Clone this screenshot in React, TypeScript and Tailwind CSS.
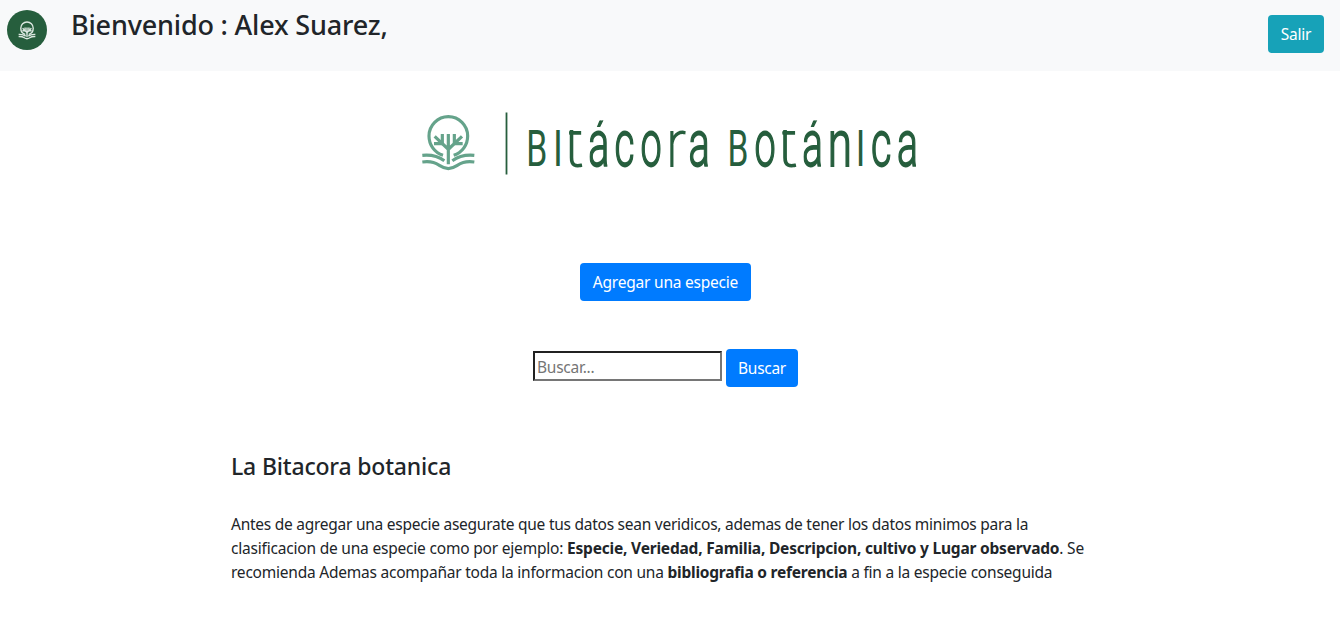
type Glyph = { ch: string; x0: number; x1: number };

/* Ink bounds of each letter in font units (2048 per em). */
const INK: Record<string, [number, number]> = {
  B: [169, 1188],
  i: [183, 375],
  t: [206, 637],
  "á": [109, 1000],
  a: [109, 1000],
  c: [92, 1003],
  o: [91, 1078],
  r: [140, 663],
  n: [140, 991],
};

const WORDS: Glyph[][] = [
  [
    { ch: "B", x0: 529, x1: 545.8 },
    { ch: "i", x0: 556.3, x1: 559.7 },
    { ch: "t", x0: 569.7, x1: 583.5 },
    { ch: "á", x0: 590, x1: 607.3 },
    { ch: "c", x0: 616.3, x1: 633.5 },
    { ch: "o", x0: 642.3, x1: 660.5 },
    { ch: "r", x0: 670.2, x1: 685 },
    { ch: "a", x0: 690.7, x1: 708 },
  ],
  [
    { ch: "B", x0: 730.3, x1: 747 },
    { ch: "o", x0: 756.3, x1: 774.5 },
    { ch: "t", x0: 783, x1: 797.3 },
    { ch: "á", x0: 804, x1: 821 },
    { ch: "n", x0: 830.7, x1: 849 },
    { ch: "i", x0: 859, x1: 862.3 },
    { ch: "c", x0: 872.7, x1: 890.3 },
    { ch: "a", x0: 899, x1: 916 },
  ],
];

function letterClass(ch: string) {
  if (ch === "i") return "font-[Roboto,sans-serif] font-normal uppercase";
  if (ch === "B") return "font-[Roboto,sans-serif] font-normal";
  if (ch === "t" || ch === "r") return "font-[Roboto,sans-serif] font-thin";
  return "font-[Roboto,sans-serif] font-light";
}

function Letter({ ch, x0, x1 }: Glyph) {
  const caps = ch === "B" || ch === "i";
  const size = caps ? 50 : 65;
  const [b0, b1] = INK[ch];
  const k = size / 2048;
  const sx = (x1 - x0) / ((b1 - b0) * k);
  const clipped = ch === "t" || ch === "á";
  const id = `clip${Math.round(x0)}`;
  return (
    <g clipPath={clipped ? `url(#${id})` : undefined}>
      {clipped && (
        <clipPath id={id}>
          <rect x={x0 - 0.5} y={ch === "t" ? 130 : 120.5} width={x1 - x0 + 2} height={50} />
        </clipPath>
      )}
      <text
        transform={`translate(${x0 - b0 * k * sx} 166) scale(${sx} 1)`}
        fontSize={size}
        className={letterClass(ch)}
        stroke="#265e3d"
        strokeWidth={caps ? 0 : 1.8}
      >
        {ch}
      </text>
    </g>
  );
}

function Mark({ weight }: { weight: number }) {
  return (
    <g fill="none" stroke="currentColor" strokeWidth={weight}>
      <path d="M84 151C58 143 42 119 42 93a58 58 0 0 1 116 0c0 26-16 50-42 58" />
      <path d="M100 178V87M99 132L59 94M101 132L141 94" />
      <path d="M82 87V114M57 116H84M118 87V114M143 116H116" />
      <path d="M22 151C52 148 70 154 88 167M178 151C148 148 130 154 112 167" />
      <path d="M22 171C72 165 72 191 100 191S128 165 178 171" />
    </g>
  );
}

function Wordmark() {
  return (
    <svg viewBox="415 105 510 80" className="h-20 w-[510px]" fill="#265e3d" role="img">
      <g transform="translate(415 105) scale(.33333)" className="text-[#65a38b]">
        <Mark weight={9.5} />
      </g>
      <rect x="505.6" y="112.5" width="1.8" height="62" />
      {WORDS.map((word, i) => (
        <g key={i}>
          {word.map((g) => (
            <Letter key={g.x0} {...g} />
          ))}
        </g>
      ))}
    </svg>
  );
}

export default function App() {
  return (
    <div className="h-[621px] overflow-hidden bg-white font-['Noto_Sans',sans-serif] text-base text-[#212529]">
      <header className="flex h-[71px] items-start bg-[#f8f9fa] pl-[7px] pr-4">
        <div className="mt-2.5 flex size-10 items-center justify-center rounded-full bg-[#265e3d] text-[#dce8e1]">
          <svg viewBox="16 28 168 172" className="h-[19px] w-[18px]">
            <Mark weight={13} />
          </svg>
        </div>
        <h3 className="ml-6 mt-2 text-[27px] leading-[33px] font-medium tracking-[-0.18px] whitespace-nowrap">
          Bienvenido : Alex Suarez,
        </h3>
        <button className="mt-[15px] ml-auto h-[38px] w-14 rounded bg-[#17a2b8] pt-0.5 text-[15.5px] tracking-[-0.22px] text-white">
          Salir
        </button>
      </header>
      <main>
        <div className="flex justify-center pt-[34px]">
          <Wordmark />
        </div>
        <div className="flex justify-center pt-[78px] pr-[9px]">
          <button className="h-[38px] w-[171px] rounded bg-[#007bff] pt-0.5 text-[15.5px] tracking-[-0.22px] whitespace-nowrap text-white">
            Agregar una especie
          </button>
        </div>
        <form className="flex justify-center gap-1 pt-12 pr-[9px]">
          <input
            placeholder="Buscar..."
            className="mt-0.5 h-[30px] w-[189px] border-2 border-t-[#212121] border-r-[#767676] border-b-[#767676] border-l-[#212121] px-0.5 pt-px text-[15.5px] tracking-[-0.25px] placeholder:text-[#757575]"
          />
          <button type="button" className="h-[38px] w-[72px] rounded bg-[#007bff] pt-0.5 text-[15.5px] tracking-[-0.3px] text-white">
            Buscar
          </button>
        </form>
        <section className="pt-[65px] pl-[231px]">
          <h4 className="text-[23px] leading-[29px] font-medium tracking-[-0.18px]">La Bitacora botanica</h4>
          <p className="mt-[31px] text-[15.5px] leading-6 whitespace-nowrap">
            <span className="block tracking-[-0.255px]">
              Antes de agregar una especie asegurate que tus datos sean veridicos, ademas de tener los datos minimos para la
            </span>
            <span className="block tracking-[-0.2px]">
              clasificacion de una especie como por ejemplo:{" "}
              <b>Especie, Veriedad, Familia, Descripcion, cultivo y Lugar observado</b>. Se
            </span>
            <span className="block tracking-[-0.225px]">
              recomienda Ademas acompañar toda la informacion con una <b>bibliografia o referencia</b> a fin a la especie
              conseguida
            </span>
          </p>
        </section>
      </main>
    </div>
  );
}
